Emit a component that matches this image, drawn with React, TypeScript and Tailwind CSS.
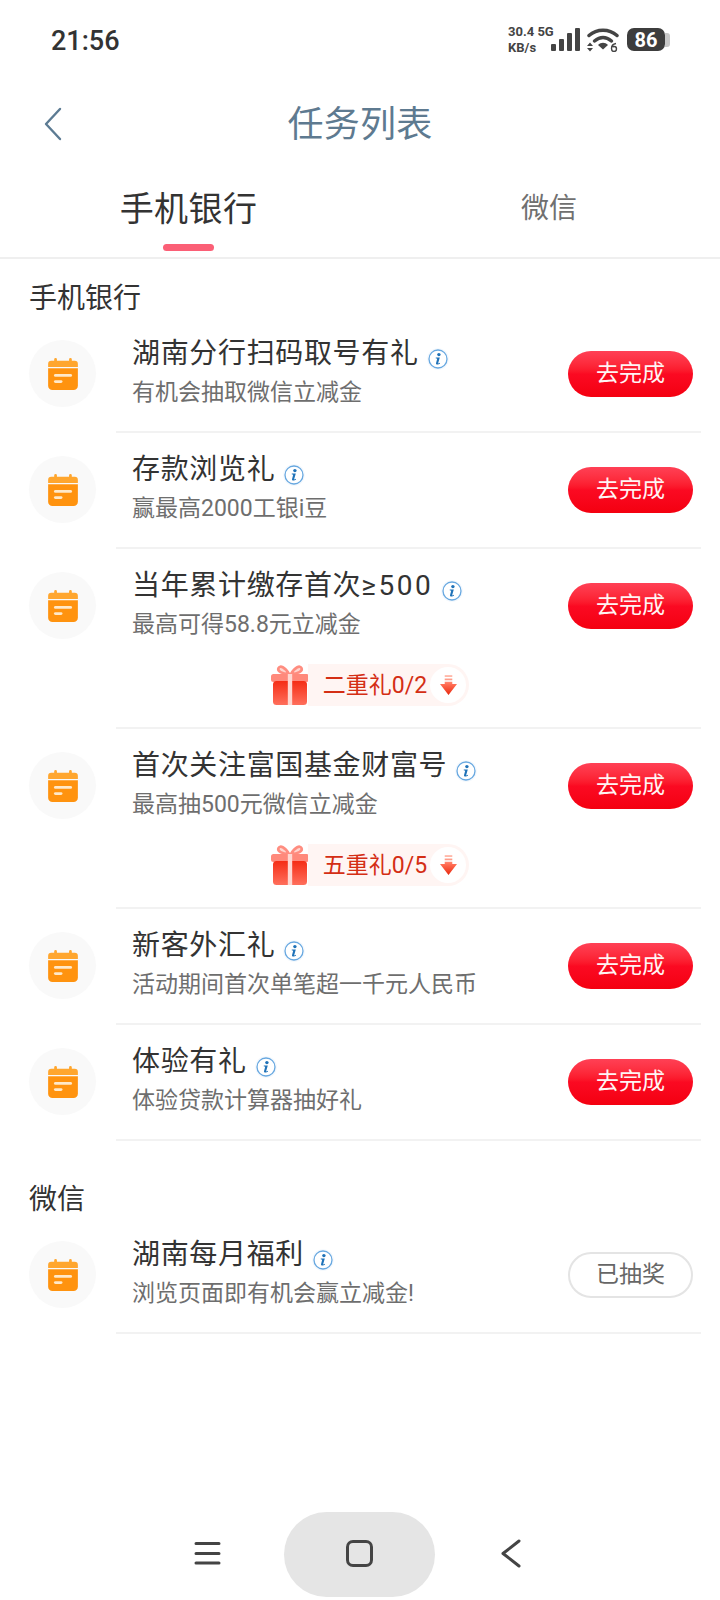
function Cal() {
  return (
    <div className="w-[67px] h-[67px] rounded-full bg-[#f9f9f9] flex items-center justify-center shrink-0">
      <svg width="34" height="34" viewBox="0 0 32 32">
        <path d="M9 1a1.300 1.300 0 0 1 1.300 1.300V3.500h11.400V2.300a1.300 1.300 0 0 1 2.600 0V3.500H27a3 3 0 0 1 3 3V9.500H2V6.500a3 3 0 0 1 3-3h2.700V2.300A1.300 1.300 0 0 1 9 1Z" fill="#ffa62e" />
        <path d="M2 10.700h28V27a4 4 0 0 1-4 4H6a4 4 0 0 1-4-4Z" fill="#ff930f" />
        <rect x="7.500" y="16" width="17" height="2.600" rx="1.300" fill="#ffe9c9" />
        <rect x="7.500" y="21.800" width="8" height="2.600" rx="1.300" fill="#ffe9c9" />
      </svg>
    </div>
  );
}

function Info() {
  return (
    <svg width="22" height="22" viewBox="0 0 22 22" className="shrink-0">
      <circle cx="11" cy="11" r="10.800" fill="#f3f8fd" />
      <circle cx="11" cy="11" r="9" fill="#fff" stroke="#68a8e0" strokeWidth="1.300" />
      <circle cx="11.900" cy="6.600" r="1.700" fill="#1f72b8" />
      <path d="M8.800 9.500h4l-1.600 5.500c-.1.500.4.600 1.600-.2l.3.600c-1.600 1.300-4.300 1.800-4.100-.2l1.200-4.500-1.500-.4Z" fill="#1f72b8" />
    </svg>
  );
}

function Gift({ id }: { id: string }) {
  return (
    <svg width="38" height="40" viewBox="0 0 38 40" className="shrink-0">
      <defs>
        <linearGradient id={id} x1="0" y1="0" x2="0" y2="1">
          <stop offset="0" stopColor="#f52d15" />
          <stop offset="1" stopColor="#ff6f5c" />
        </linearGradient>
      </defs>
      <path d="M18 9C14 2 9 0 7.500 3c-1.500 3 3.500 6 10.500 6Zm2 0c4-7 9-9 10.500-6 1.500 3-3.500 6-10.500 6Z" fill="#ffd5cf" stroke="#ff8d80" strokeWidth="2.600" />
      <rect x="0" y="9" width="38" height="8" rx="2.500" fill="#ff897b" />
      <rect x="2" y="16" width="34" height="24" rx="3.500" fill={`url(#${id})`} />
      <rect x="16.800" y="9" width="4.400" height="31" fill="#ffd8d2" />
    </svg>
  );
}

function Arrow({ id }: { id: string }) {
  return (
    <div className="w-[36px] h-[36px] rounded-full bg-white flex items-center justify-center">
      <svg width="17" height="20" viewBox="0 0 18 21">
        <defs>
          <linearGradient id={id} x1="0" y1="0" x2="0" y2="1">
            <stop offset="0" stopColor="#ffc5b8" />
            <stop offset="0.500" stopColor="#ff6a50" />
            <stop offset="1" stopColor="#e82a10" />
          </linearGradient>
        </defs>
        <path d="M5 0h8v2H5ZM5 3.500h8v2H5ZM5 7h8v2.500h5L9 21 0 9.500h5Z" fill={`url(#${id})`} />
      </svg>
    </div>
  );
}

type T = { title: string; tail?: string; sub: string; extra?: string; done?: boolean; id: string };

function Row({ title, tail, sub, extra, done, id }: T) {
  return (
    <div className="pl-[29px] pr-[19px]">
      <div className="flex pt-[19px] items-start">
        <div className="mt-[4px]"><Cal /></div>
        <div className="ml-[36px] flex-1 min-w-0">
          <div className="flex items-center h-[36px]">
            <span className="text-[28px] leading-[36px] text-[#333333] tracking-[0.66px] whitespace-nowrap">
              {title}
              {tail && <span className="tracking-[2.500px]">{tail}</span>}
            </span>
            <span className="ml-[8px] mt-[10px]"><Info /></span>
          </div>
          <div className="text-[23px] leading-[30px] mt-[6px] text-[#6e6e6e] whitespace-nowrap">{sub}</div>
        </div>
        {done ? (
          <div className="mt-[15px] mr-[8px] w-[125px] h-[46px] rounded-full border-2 border-[#e4e4e4] bg-white flex items-center justify-center text-[23px] text-[#666666] shrink-0">
            {"已抽奖"}
          </div>
        ) : (
          <div className="mt-[15px] mr-[8px] w-[125px] h-[46px] rounded-full bg-gradient-to-b from-[#ff4055] via-[#fb0a22] to-[#f4000f] flex items-center justify-center text-[23px] text-[#fff4f4] shrink-0">
            {"去完成"}
          </div>
        )}
      </div>
      {extra && (
        <div className="flex justify-center mt-[24px] pl-[10px]">
          <div className="flex items-center h-[42px]">
            <Gift id={`${id}g`} />
            <div className="-ml-[1px] h-[42px] rounded-r-full rounded-l-[14px] bg-[#fff5f3] flex items-center pl-[15px] pr-[3px]">
              <span className="text-[23px] text-[#d42e14] leading-none whitespace-nowrap">{extra}</span>
              <span className="ml-[3px]"><Arrow id={`${id}a`} /></span>
            </div>
          </div>
        </div>
      )}
      <div className={`ml-[87px] h-[2px] bg-[#f2f2f2] ${extra ? "mt-[21px]" : "mt-[23px]"}`} />
    </div>
  );
}

function Status() {
  return (
    <div className="h-[80px] flex items-center justify-between pl-[51px] pr-[50px] pb-[1px]">
      <span className="mt-[3px] text-[27px] font-medium text-[#333333] font-['Roboto',sans-serif]">21:56</span>
      <div className="flex items-center">
        <div className="w-[43px] flex flex-col text-[13px] leading-[16px] font-bold text-[#444444] whitespace-nowrap font-['Roboto',sans-serif]">
          <span>30.4 5G</span>
          <span>KB/s</span>
        </div>
        <svg width="29" height="24" viewBox="0 0 29 24">
          <rect x="0" y="16" width="5" height="7" rx="1" fill="#444" />
          <rect x="8" y="11" width="5" height="12" rx="1" fill="#444" />
          <rect x="16" y="5" width="5" height="18" rx="1" fill="#444" />
          <rect x="24" y="0" width="5" height="23" rx="1" fill="#444" />
        </svg>
        <svg width="32" height="24" viewBox="0 0 32 24" className="ml-[7px]">
          <path d="M2 7.500C10 0.500 22 0.500 30 7.500" fill="none" stroke="#444" strokeWidth="3.500" strokeLinecap="round" />
          <path d="M7.500 13C13 8.500 19 8.500 24.500 13" fill="none" stroke="#444" strokeWidth="3.500" strokeLinecap="round" />
          <path d="M11 17c3-3 7-3 10 0l-5 4.500Z" fill="#444" />
          <path d="M0 18l3-3.500 3 3.500ZM0 20l3 3.500 3-3.500Z" fill="#444" />
          <path d="M29 15.500c-3 .5-4.500 2.500-4.500 5 0 2 1.200 3 2.500 3s2.500-1 2.500-2.500-1-2.500-2.200-2.500c-.8 0-1.300.3-1.500.8M29 15.500" fill="none" stroke="#444" strokeWidth="1.400" />
        </svg>
        <div className="ml-[8px] flex items-center">
          <div className="w-[38px] h-[23px] rounded-[7px] bg-[#3d3d3d] text-white text-[20px] font-bold flex items-center justify-center font-['Roboto',sans-serif]">86</div>
          <div className="w-[5px] h-[14px] rounded-r-[3px] bg-[#c8c8c8]" />
        </div>
      </div>
    </div>
  );
}

export default function App() {
  return (
    <div className="relative w-[720px] h-[1600px] bg-white overflow-hidden font-['Roboto','Noto_Sans_CJK_SC',sans-serif]">
      <Status />
      <div className="relative h-[88px] flex items-center justify-center pt-[2px]">
        <svg width="20" height="34" viewBox="0 0 20 34" className="absolute left-[43px] top-[27px]">
          <path d="M17 2 3 17l14 15" fill="none" stroke="#5c7b93" strokeWidth="2.400" strokeLinecap="round" strokeLinejoin="round" />
        </svg>
        <span className="text-[36px] text-[#5e7a90] tracking-[0.2px]">{"任务列表"}</span>
      </div>
      <div className="relative h-[91px] border-b-2 border-[#efefef] flex">
        <div className="w-[377px] flex justify-center pt-[19px]">
          <span className="text-[34px] leading-[44px] tracking-[0.4px] text-[#333333]">{"手机银行"}</span>
        </div>
        <div className="flex-1 pl-[144px] pt-[21px]">
          <span className="text-[28px] leading-[40px] text-[#707070]">{"微信"}</span>
        </div>
        <div className="absolute left-[163px] bottom-[6px] w-[51px] h-[7px] rounded-full bg-[#fb5f76]" />
      </div>
      <div className="h-[58px] pt-[18px] pl-[29px] text-[28px] leading-[44px] text-[#333333]">{"手机银行"}</div>
      <Row id="a" title="湖南分行扫码取号有礼" sub="有机会抽取微信立减金" />
      <Row id="b" title="存款浏览礼" sub="赢最高2000工银i豆" />
      <Row id="c" title="当年累计缴存首次" tail="≥500" sub="最高可得58.8元立减金" extra="二重礼0/2" />
      <Row id="d" title="首次关注富国基金财富号" sub="最高抽500元微信立减金" extra="五重礼0/5" />
      <Row id="e" title="新客外汇礼" sub="活动期间首次单笔超一千元人民币" />
      <Row id="f" title="体验有礼" sub="体验贷款计算器抽好礼" />
      <div className="h-[77px] pt-[37px] pl-[29px] text-[28px] leading-[44px] text-[#333333]">{"微信"}</div>
      <Row id="h" title="湖南每月福利" sub="浏览页面即有机会赢立减金!" done />
      <div className="absolute left-0 right-0 bottom-0 h-[88px]">
        <svg width="30" height="26" viewBox="0 0 30 26" className="absolute left-[193px] top-[28px]">
          <path d="M3 3.500h23M3 13.500h23M3 23h23" stroke="#444" strokeWidth="3" strokeLinecap="round" />
        </svg>
        <div className="absolute left-[284px] top-0 w-[151px] h-[85px] rounded-full bg-[#e5e5e5] flex items-center justify-center">
          <div className="w-[27px] h-[27px] mb-[2px] rounded-[7px] border-[3px] border-[#444444]" />
        </div>
        <svg width="22" height="30" viewBox="0 0 22 30" className="absolute left-[499px] top-[27px]">
          <path d="M20 2 4 14.500 20 27" fill="none" stroke="#444" strokeWidth="3" strokeLinecap="round" strokeLinejoin="round" />
        </svg>
      </div>
    </div>
  );
}
